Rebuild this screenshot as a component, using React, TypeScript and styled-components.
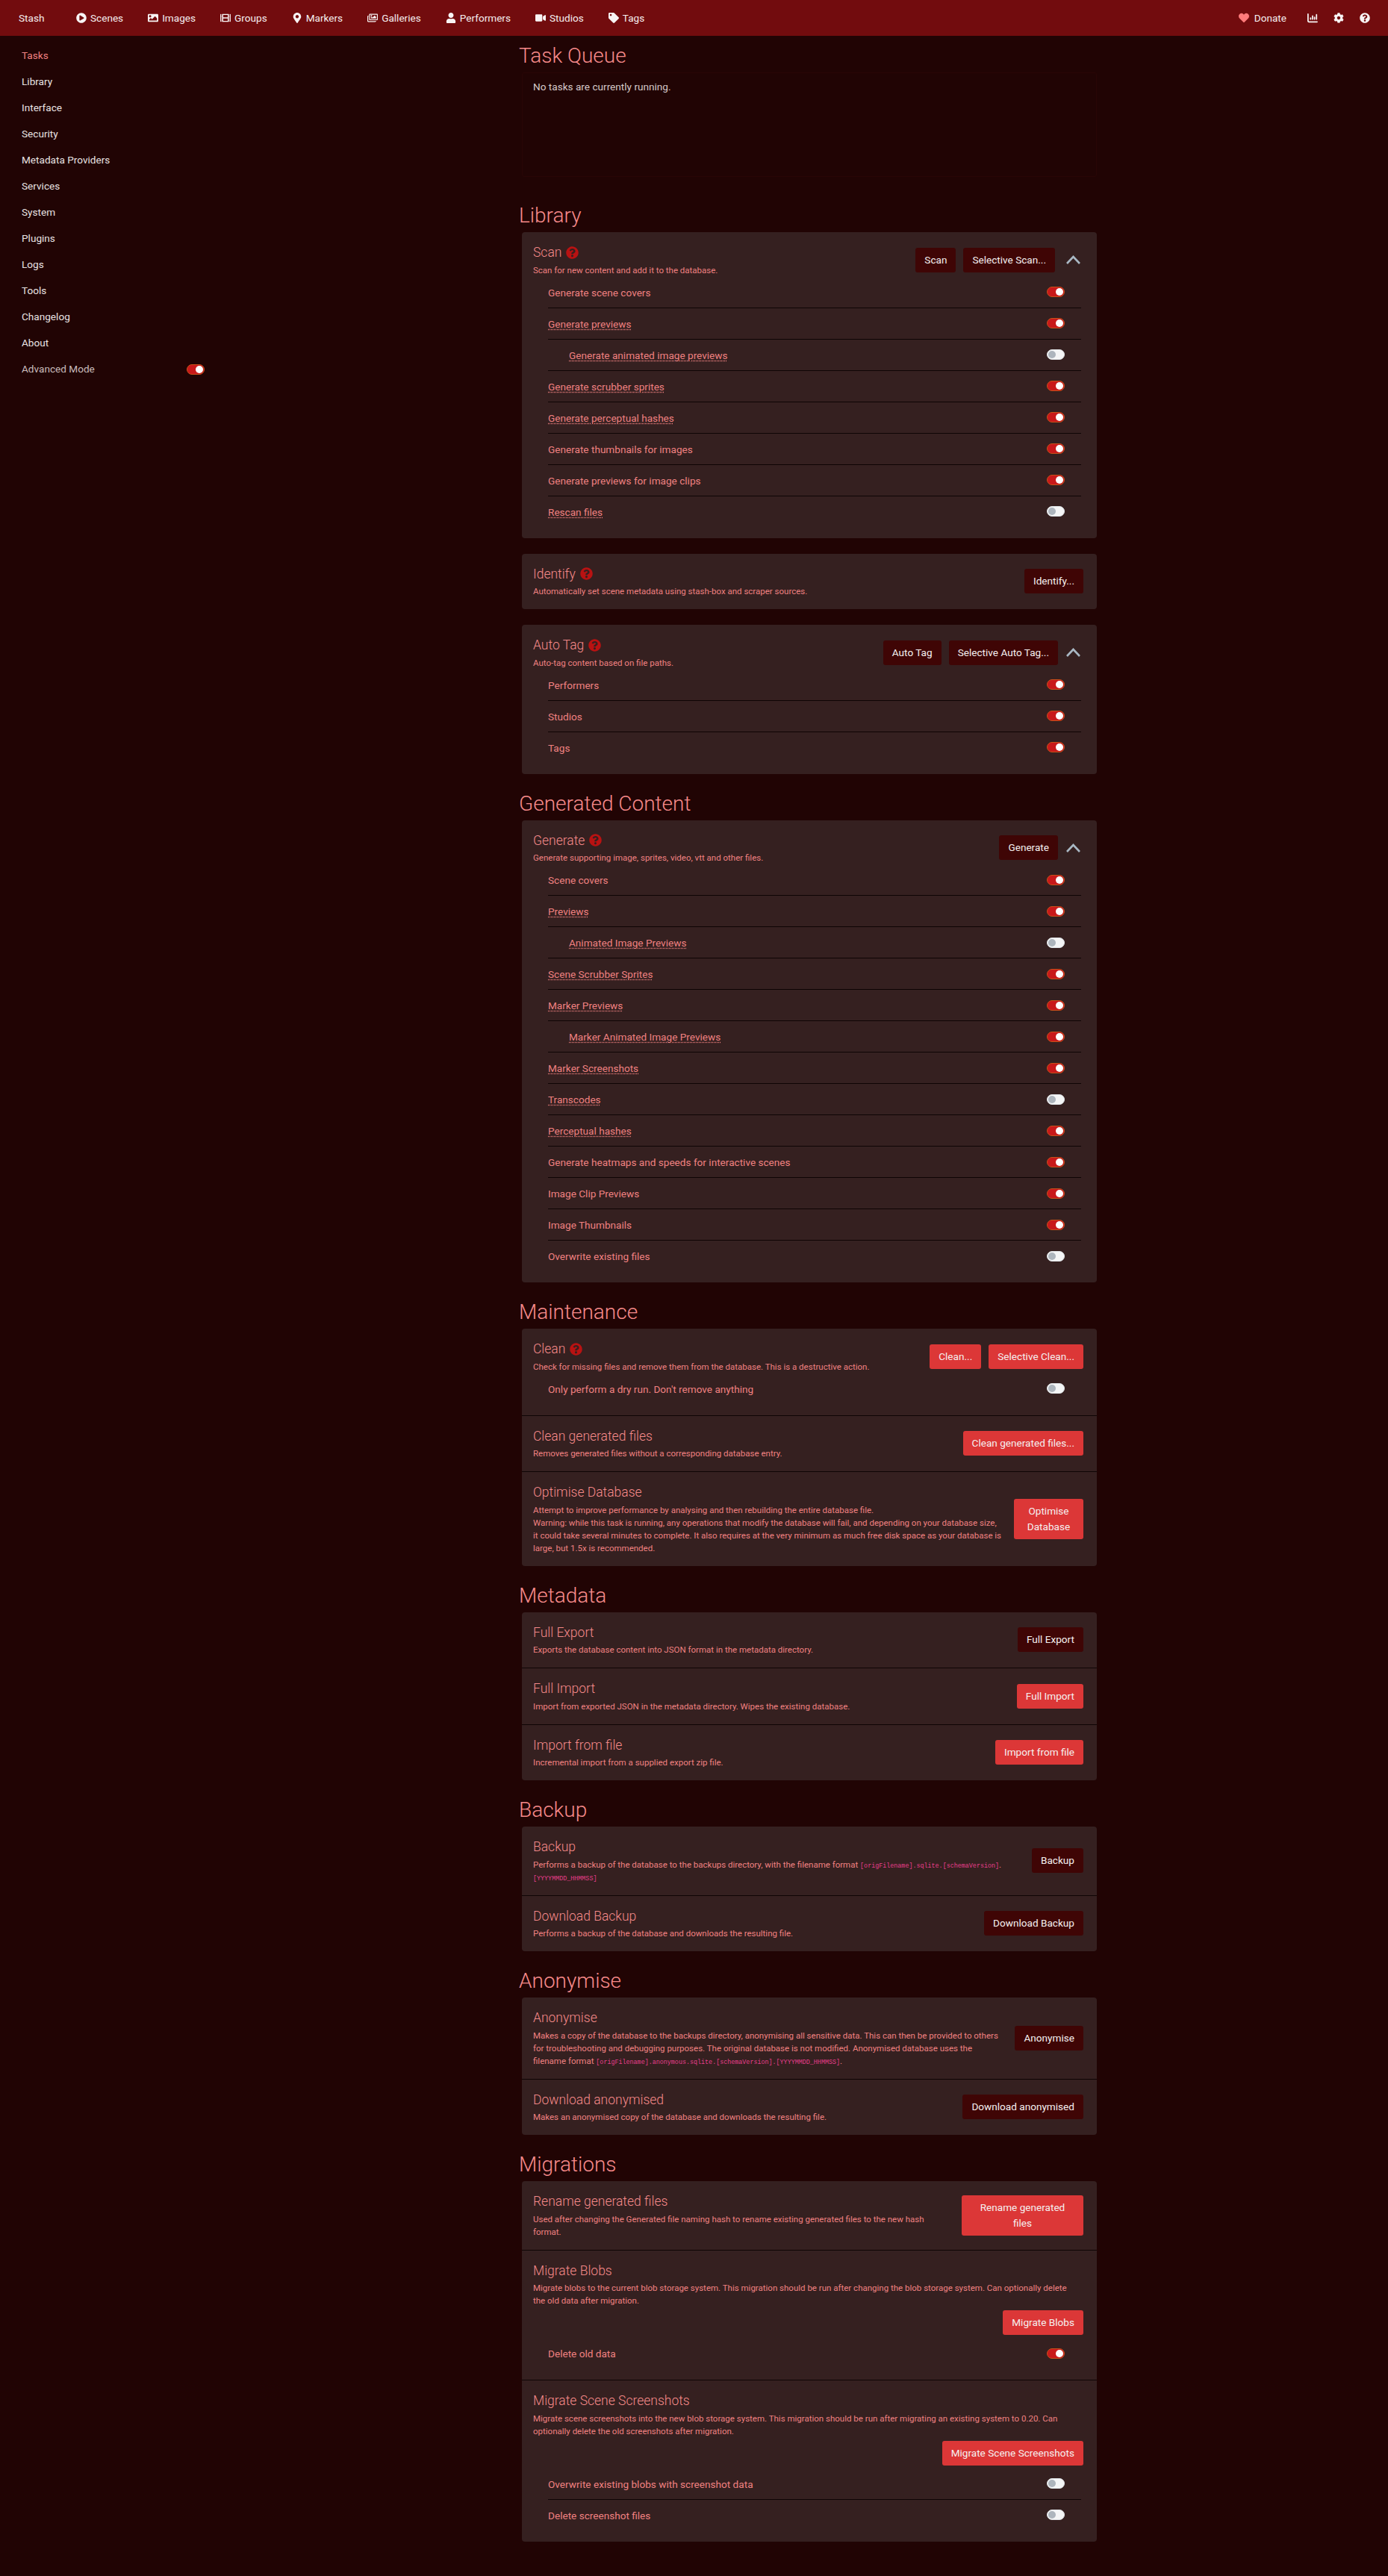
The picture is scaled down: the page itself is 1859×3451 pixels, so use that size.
import React from "react";
import styled, { createGlobalStyle } from "styled-components";
import {
  FaPlayCircle, FaImage, FaFilm, FaMapMarkerAlt, FaRegImages, FaUser, FaVideo, FaTag,
  FaHeart, FaCog, FaQuestionCircle,
} from "react-icons/fa";
import { FaChartColumn } from "react-icons/fa6";

const pink = "#f08080";
const headingPink = "#f68a8a";

const GlobalStyle = createGlobalStyle`
  html, body { margin: 0; padding: 0; background: #210404; }
  body {
    font-family: Roboto, "Liberation Sans", sans-serif;
    font-size: 13.6px;
    line-height: 21px;
    color: ${pink};
  }
`;

const navLinks = [
  { label: "Scenes", icon: <FaPlayCircle /> },
  { label: "Images", icon: <FaImage /> },
  { label: "Groups", icon: <FaFilm /> },
  { label: "Markers", icon: <FaMapMarkerAlt /> },
  { label: "Galleries", icon: <FaRegImages /> },
  { label: "Performers", icon: <FaUser /> },
  { label: "Studios", icon: <FaVideo /> },
  { label: "Tags", icon: <FaTag /> },
];

const sideLinks = ["Tasks", "Library", "Interface", "Security", "Metadata Providers", "Services", "System", "Plugins", "Logs", "Tools", "Changelog", "About"];

type Row = { label: string; on: boolean; tip?: boolean; sub?: boolean };

const row = (label: string, on = true, tip = false, sub = false): Row => ({ label, on, tip, sub });

const scanRows = [
  row("Generate scene covers"),
  row("Generate previews", true, true),
  row("Generate animated image previews", false, true, true),
  row("Generate scrubber sprites", true, true),
  row("Generate perceptual hashes", true, true),
  row("Generate thumbnails for images"),
  row("Generate previews for image clips"),
  row("Rescan files", false, true),
];

const autoTagRows = [row("Performers"), row("Studios"), row("Tags")];

const generateRows = [
  row("Scene covers"),
  row("Previews", true, true),
  row("Animated Image Previews", false, true, true),
  row("Scene Scrubber Sprites", true, true),
  row("Marker Previews", true, true),
  row("Marker Animated Image Previews", true, true, true),
  row("Marker Screenshots", true, true),
  row("Transcodes", false, true),
  row("Perceptual hashes", true, true),
  row("Generate heatmaps and speeds for interactive scenes"),
  row("Image Clip Previews"),
  row("Image Thumbnails"),
  row("Overwrite existing files", false),
];

const Page = styled.div`
  min-height: 3451px;
`;

const Navbar = styled.nav`
  height: 48px;
  background: #720c0e;
  display: flex;
  align-items: center;
  padding: 0 24px 0 25px;
  color: #f5eded;
`;

const Brand = styled.div`
  width: 77px;
`;

const NavLinks = styled.div`
  display: flex;
  gap: 33px;
  flex: 1;
`;

const NavLink = styled.div`
  display: flex;
  align-items: center;
  gap: 5px;
  svg { font-size: 14px; color: #f8f4f4; }
`;

const NavRight = styled.div`
  display: flex;
  align-items: center;
  svg { font-size: 14px; color: #f8f4f4; display: block; }
`;

const Donate = styled.div`
  display: flex;
  align-items: center;
  gap: 7px;
  margin-right: 7px;
  svg { color: #ff7b7b; }
`;

const IconSlot = styled.div`
  margin-left: 21px;
`;

const Layout = styled.div`
  display: flex;
`;

const Sidebar = styled.aside`
  flex: 0 0 695px;
  padding: 9px 0 0 29px;
  box-sizing: border-box;
`;

const SideLink = styled.div<{ $active?: boolean }>`
  height: 35px;
  line-height: 35px;
  color: ${(p) => (p.$active ? pink : "#e8e2e2")};
`;

const AdvancedRow = styled.div`
  width: 245px;
  height: 35px;
  display: flex;
  align-items: center;
  justify-content: space-between;
  color: #c9bcbc;
`;

const Main = styled.main`
  width: 774px;
  padding-top: 10px;
`;

const Section = styled.section`
  margin-bottom: 23px;
`;

const TaskSection = styled(Section)`
  margin-bottom: 35px;
`;

const Heading = styled.h2`
  margin: 0 0 5px;
  font-size: 28px;
  line-height: 34px;
  font-weight: 300;
  color: ${headingPink};
`;

const QueueBox = styled.div`
  margin-left: 4px;
  height: 140px;
  box-sizing: border-box;
  padding: 8px 14px;
  border: 1px solid #290606;
  border-radius: 3px;
  color: #d6c9c9;
`;

const Card = styled.div`
  margin: 0 0 21px 4px;
  background: #352020;
  border-radius: 4px;
  &:last-child { margin-bottom: 0; }
`;

const Setting = styled.div`
  padding: 15px 18px 15px 15px;
  border-top: 1px solid #0e0404;
  &:first-child { border-top: none; }
`;

const SettingHead = styled.div`
  display: flex;
  align-items: center;
  justify-content: space-between;
  gap: 10px;
`;

const SettingText = styled.div`
  min-width: 0;
`;

const Title = styled.h3`
  margin: 0 0 3.5px;
  display: flex;
  align-items: center;
  gap: 6px;
  font-size: 17.5px;
  line-height: 24px;
  font-weight: 300;
  color: ${headingPink};
  svg { font-size: 17px; color: #b91212; }
`;

const Desc = styled.div`
  font-size: 11.5px;
  line-height: 17px;
  white-space: nowrap;
`;

const Code = styled.code`
  font-family: "Liberation Mono", monospace;
  font-size: 8.4px;
  line-height: 1;
  color: #e83e8c;
`;

const Actions = styled.div`
  display: flex;
  align-items: center;
  gap: 10px;
  flex-shrink: 0;
`;

const Button = styled.button<{ $danger?: boolean; $width?: number }>`
  font: inherit;
  line-height: 21px;
  padding: 6px 12px;
  border: none;
  border-radius: 3px;
  color: #f5f0f0;
  background: ${(p) => (p.$danger ? "#dc3737" : "#3f0505")};
  width: ${(p) => (p.$width ? `${p.$width}px` : "auto")};
  white-space: ${(p) => (p.$width ? "normal" : "nowrap")};
`;

const Collapse = styled.div<{ $wide?: boolean }>`
  display: flex;
  align-items: center;
  justify-content: center;
  width: 24px;
  margin-left: ${(p) => (p.$wide ? "2px" : "-2px")};
  margin-right: 2px;
  svg { display: block; }
`;

const Rows = styled.div`
  margin-right: 3px;
  padding-left: 20px;
`;

const SubActions = styled.div`
  display: flex;
  justify-content: flex-end;
  margin: 4px 0;
`;

const RowItem = styled.div<{ $sub?: boolean }>`
  height: 41px;
  display: flex;
  align-items: center;
  justify-content: space-between;
  padding: 0 22px 0 ${(p) => (p.$sub ? "28px" : "0")};
  border-bottom: 1px solid #0e0404;
  &:last-child { border-bottom: none; }
`;

const RowLabel = styled.span<{ $tip?: boolean }>`
  position: relative;
  top: 1px;
  text-decoration: ${(p) => (p.$tip ? "underline dotted" : "none")};
  text-underline-offset: 2px;
`;

const Track = styled.span<{ $on: boolean }>`
  width: 24px;
  height: 14px;
  box-sizing: border-box;
  border-radius: 7px;
  display: flex;
  align-items: center;
  justify-content: ${(p) => (p.$on ? "flex-end" : "flex-start")};
  padding: 0 1px;
  background: ${(p) => (p.$on ? "#c8191a" : "#f4f5f6")};
  border: 1px solid ${(p) => (p.$on ? "#c8501a" : "#dfe3e6")};
`;

const Knob = styled.span<{ $on: boolean }>`
  width: 10px;
  height: 10px;
  border-radius: 50%;
  background: ${(p) => (p.$on ? "#fff" : "#adb5bd")};
`;

const Toggle = ({ on }: { on: boolean }) => (
  <Track $on={on}>
    <Knob $on={on} />
  </Track>
);

const RowList = ({ rows }: { rows: Row[] }) => (
  <Rows>
    {rows.map((r) => (
      <RowItem key={r.label} $sub={r.sub}>
        <RowLabel $tip={r.tip}>{r.label}</RowLabel>
        <Toggle on={r.on} />
      </RowItem>
    ))}
  </Rows>
);

interface TaskProps {
  title: string;
  help?: boolean;
  desc: React.ReactNode;
  actions?: React.ReactNode;
  rows?: Row[];
  below?: React.ReactNode;
}

const Task = ({ title, help, desc, actions, rows, below }: TaskProps) => (
  <Setting>
    <SettingHead>
      <SettingText>
        <Title>
          {title}
          {help && <FaQuestionCircle />}
        </Title>
        <Desc>{desc}</Desc>
      </SettingText>
      {actions && <Actions>{actions}</Actions>}
    </SettingHead>
    {below && <SubActions>{below}</SubActions>}
    {rows && <RowList rows={rows} />}
  </Setting>
);

const Chevron = ({ wide }: { wide?: boolean }) => (
  <Collapse $wide={wide}>
    <svg width="19" height="12" viewBox="0 0 19 12" fill="none" stroke="#a9b8c4" strokeWidth="2.6">
      <path d="M1 11 L9.5 2 L18 11" />
    </svg>
  </Collapse>
);

const App = () => (
  <Page>
    <GlobalStyle />
    <Navbar>
      <Brand>Stash</Brand>
      <NavLinks>
        {navLinks.map((n) => (
          <NavLink key={n.label}>
            {n.icon}
            {n.label}
          </NavLink>
        ))}
      </NavLinks>
      <NavRight>
        <Donate>
          <FaHeart />
          Donate
        </Donate>
        <IconSlot><FaChartColumn /></IconSlot>
        <IconSlot><FaCog /></IconSlot>
        <IconSlot><FaQuestionCircle /></IconSlot>
      </NavRight>
    </Navbar>
    <Layout>
      <Sidebar>
        {sideLinks.map((s, i) => (
          <SideLink key={s} $active={i === 0}>{s}</SideLink>
        ))}
        <AdvancedRow>
          Advanced Mode
          <Toggle on />
        </AdvancedRow>
      </Sidebar>
      <Main>
        <TaskSection>
          <Heading>Task Queue</Heading>
          <QueueBox>No tasks are currently running.</QueueBox>
        </TaskSection>

        <Section>
          <Heading>Library</Heading>
          <Card>
            <Task
              title="Scan"
              help
              desc="Scan for new content and add it to the database."
              actions={<><Button>Scan</Button><Button>Selective Scan...</Button><Chevron wide /></>}
              rows={scanRows}
            />
          </Card>
          <Card>
            <Task
              title="Identify"
              help
              desc="Automatically set scene metadata using stash-box and scraper sources."
              actions={<Button>Identify...</Button>}
            />
          </Card>
          <Card>
            <Task
              title="Auto Tag"
              help
              desc="Auto-tag content based on file paths."
              actions={<><Button>Auto Tag</Button><Button>Selective Auto Tag...</Button><Chevron /></>}
              rows={autoTagRows}
            />
          </Card>
        </Section>

        <Section>
          <Heading>Generated Content</Heading>
          <Card>
            <Task
              title="Generate"
              help
              desc="Generate supporting image, sprites, video, vtt and other files."
              actions={<><Button>Generate</Button><Chevron /></>}
              rows={generateRows}
            />
          </Card>
        </Section>

        <Section>
          <Heading>Maintenance</Heading>
          <Card>
            <Task
              title="Clean"
              help
              desc="Check for missing files and remove them from the database. This is a destructive action."
              actions={<><Button $danger>Clean...</Button><Button $danger>Selective Clean...</Button></>}
              rows={[row("Only perform a dry run. Don't remove anything", false)]}
            />
            <Task
              title="Clean generated files"
              desc="Removes generated files without a corresponding database entry."
              actions={<Button $danger>Clean generated files...</Button>}
            />
            <Task
              title="Optimise Database"
              desc={<>Attempt to improve performance by analysing and then rebuilding the entire database file.<br />Warning: while this task is running, any operations that modify the database will fail, and depending on your database size,<br />it could take several minutes to complete. It also requires at the very minimum as much free disk space as your database is<br />large, but 1.5x is recommended.</>}
              actions={<Button $danger $width={93}>Optimise Database</Button>}
            />
          </Card>
        </Section>

        <Section>
          <Heading>Metadata</Heading>
          <Card>
            <Task
              title="Full Export"
              desc="Exports the database content into JSON format in the metadata directory."
              actions={<Button>Full Export</Button>}
            />
            <Task
              title="Full Import"
              desc="Import from exported JSON in the metadata directory. Wipes the existing database."
              actions={<Button $danger>Full Import</Button>}
            />
            <Task
              title="Import from file"
              desc="Incremental import from a supplied export zip file."
              actions={<Button $danger>Import from file</Button>}
            />
          </Card>
        </Section>

        <Section>
          <Heading>Backup</Heading>
          <Card>
            <Task
              title="Backup"
              desc={<>Performs a backup of the database to the backups directory, with the filename format <Code>[origFilename].sqlite.[schemaVersion]</Code>.<br /><Code>[YYYYMMDD_HHMMSS]</Code></>}
              actions={<Button>Backup</Button>}
            />
            <Task
              title="Download Backup"
              desc="Performs a backup of the database and downloads the resulting file."
              actions={<Button>Download Backup</Button>}
            />
          </Card>
        </Section>

        <Section>
          <Heading>Anonymise</Heading>
          <Card>
            <Task
              title="Anonymise"
              desc={<>Makes a copy of the database to the backups directory, anonymising all sensitive data. This can then be provided to others<br />for troubleshooting and debugging purposes. The original database is not modified. Anonymised database uses the<br />filename format <Code>[origFilename].anonymous.sqlite.[schemaVersion].[YYYYMMDD_HHMMSS]</Code>.</>}
              actions={<Button>Anonymise</Button>}
            />
            <Task
              title="Download anonymised"
              desc="Makes an anonymised copy of the database and downloads the resulting file."
              actions={<Button>Download anonymised</Button>}
            />
          </Card>
        </Section>

        <Section>
          <Heading>Migrations</Heading>
          <Card>
            <Task
              title="Rename generated files"
              desc={<>Used after changing the Generated file naming hash to rename existing generated files to the new hash<br />format.</>}
              actions={<Button $danger $width={163}>Rename generated files</Button>}
            />
            <Task
              title="Migrate Blobs"
              desc={<>Migrate blobs to the current blob storage system. This migration should be run after changing the blob storage system. Can optionally delete<br />the old data after migration.</>}
              below={<Button $danger>Migrate Blobs</Button>}
              rows={[row("Delete old data")]}
            />
            <Task
              title="Migrate Scene Screenshots"
              desc={<>Migrate scene screenshots into the new blob storage system. This migration should be run after migrating an existing system to 0.20. Can<br />optionally delete the old screenshots after migration.</>}
              below={<Button $danger>Migrate Scene Screenshots</Button>}
              rows={[row("Overwrite existing blobs with screenshot data", false), row("Delete screenshot files", false)]}
            />
          </Card>
        </Section>
      </Main>
    </Layout>
  </Page>
);

export default App;
